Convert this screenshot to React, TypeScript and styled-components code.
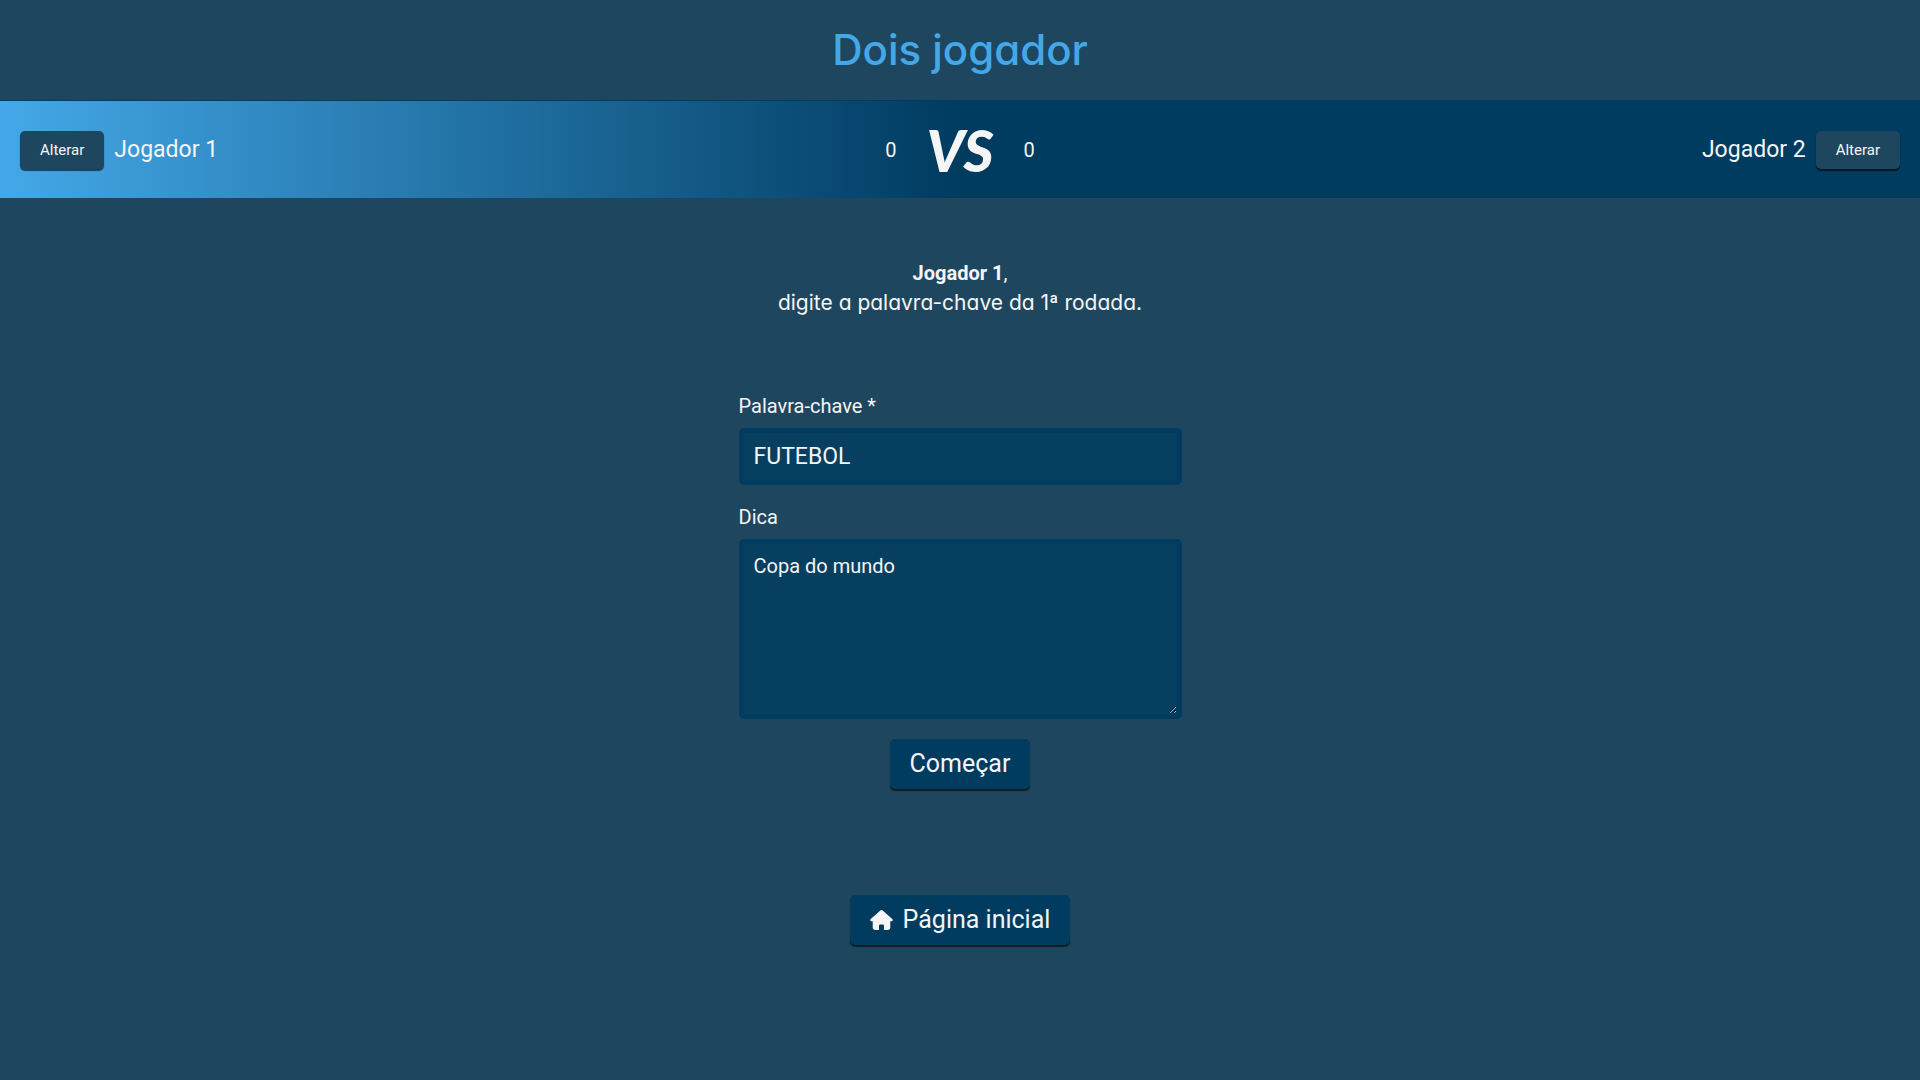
import React, { useState } from "react";
import styled, { createGlobalStyle } from "styled-components";

const navy = "#003b60";
const slate = "#1e475f";
const sky = "#44a8e8";
const light = "#f5f5f5";
const display = `Inter, "Noto Sans", sans-serif`;

const GlobalStyle = createGlobalStyle`
  * { box-sizing: border-box; }
  body {
    margin: 0;
    min-height: 100vh;
    background: ${slate};
    color: ${light};
    font-family: Roboto, "Liberation Sans", sans-serif;
    font-size: 20px;
  }
  button, input, textarea { font-family: inherit; color: inherit; }
`;

const Page = styled.div`
  display: flex;
  flex-direction: column;
`;

const Title = styled.h1`
  margin: 0;
  padding: 20px;
  text-align: center;
  color: ${sky};
  font: 500 42px/60px ${display};
  font-feature-settings: "cv11";
`;

const Scoreboard = styled.header`
  display: grid;
  grid-template-columns: 1fr auto 1fr;
  align-items: center;
  height: 98px;
  padding: 0 20px;
  border-top: 1px solid ${navy};
  background: linear-gradient(90deg, ${sky}, ${navy} 50%);
`;

const Player = styled.div<{ $end?: boolean }>`
  display: flex;
  align-items: center;
  gap: 10px;
  justify-content: ${(p) => (p.$end ? "flex-end" : "flex-start")};
  font-size: 23px;
`;

const Score = styled.div`
  display: flex;
  align-items: center;
  gap: 30px;
`;

const Versus = styled.strong`
  font: italic 900 58px/60px Lato, sans-serif;
`;

const Button = styled.button<{ $small?: boolean }>`
  display: inline-flex;
  align-items: center;
  gap: 10px;
  border: 0;
  border-radius: 5px;
  padding: 10px 20px;
  background: ${(p) => (p.$small ? slate : navy)};
  color: ${light};
  font-size: ${(p) => (p.$small ? 15 : 25)}px;
  line-height: ${(p) => (p.$small ? 18 : 30)}px;
  text-decoration: none;
  box-shadow: 0 2px 1px rgba(0, 0, 0, 0.6);
  cursor: pointer;
`;

const Main = styled.main`
  display: flex;
  flex-direction: column;
  align-items: center;
`;

const Prompt = styled.p`
  margin: 60px 0 76px;
  text-align: center;
  line-height: 30px;
`;

const Instruction = styled.span`
  display: block;
  font-family: ${display};
  font-size: 21px;
  font-feature-settings: "cv11";
`;

const Form = styled.form`
  display: flex;
  flex-direction: column;
  width: 443px;
  max-width: 100%;
`;

const Label = styled.label`
  margin: 0 0 10px;
  line-height: 24px;
`;

const Field = styled.input`
  height: 57px;
  margin: 0 0 20px;
  padding: 10px;
  border: 5px solid ${navy};
  border-radius: 5px;
  background: #073f60;
  font-size: 23px;
  text-transform: uppercase;
`;

const Hint = styled.textarea`
  height: 180px;
  margin: 0 0 20px;
  padding: 10px;
  border: 5px solid ${navy};
  border-radius: 5px;
  background: #073f60;
  color-scheme: dark;
  font-size: 20px;
  line-height: 24px;
`;

const Actions = styled.div`
  display: flex;
  justify-content: center;
`;

const Footer = styled.footer`
  padding: 106px 20px 20px;
  text-align: center;
`;

const HomeIcon = () => (
  <svg width="23" height="20" viewBox="0 0 576 512" fill="currentColor" aria-hidden="true">
    <path d="M575.8 255.500c0 18-15 32.100-32 32.100h-32l.7 160.200c0 35.300-28.700 64.200-64 64.200H352v-112c0-17.700-14.300-32-32-32h-64c-17.700 0-32 14.300-32 32v112h-96.500c-35.300 0-64-28.700-64-64V287.600H32c-18 0-32-14-32-32.100 0-9 3-17 10-24L266.400 8c7-7 15-8 22-8s15 2 21 7l255.400 224.500c8 7 12 15 11 24z" />
  </svg>
);

export default function App() {
  const [word, setWord] = useState("FUTEBOL");
  const [hint, setHint] = useState("Copa do mundo");
  return (
    <Page>
      <GlobalStyle />
      <Title>Dois jogador</Title>
      <Scoreboard>
        <Player>
          <Button $small type="button">Alterar</Button>
          <span>Jogador 1</span>
        </Player>
        <Score>
          <span>0</span>
          <Versus>VS</Versus>
          <span>0</span>
        </Score>
        <Player $end>
          <span>Jogador 2</span>
          <Button $small type="button">Alterar</Button>
        </Player>
      </Scoreboard>
      <Main>
        <Prompt>
          <strong>Jogador 1</strong>,
          <Instruction>digite a palavra-chave da 1ª rodada.</Instruction>
        </Prompt>
        <Form onSubmit={(e) => e.preventDefault()}>
          <Label htmlFor="word">Palavra-chave *</Label>
          <Field id="word" required value={word} onChange={(e) => setWord(e.target.value)} />
          <Label htmlFor="hint">Dica</Label>
          <Hint id="hint" value={hint} onChange={(e) => setHint(e.target.value)} />
          <Actions>
            <Button type="submit">Começar</Button>
          </Actions>
        </Form>
      </Main>
      <Footer>
        <Button as="a" href="#inicio">
          <HomeIcon />
          Página inicial
        </Button>
      </Footer>
    </Page>
  );
}
